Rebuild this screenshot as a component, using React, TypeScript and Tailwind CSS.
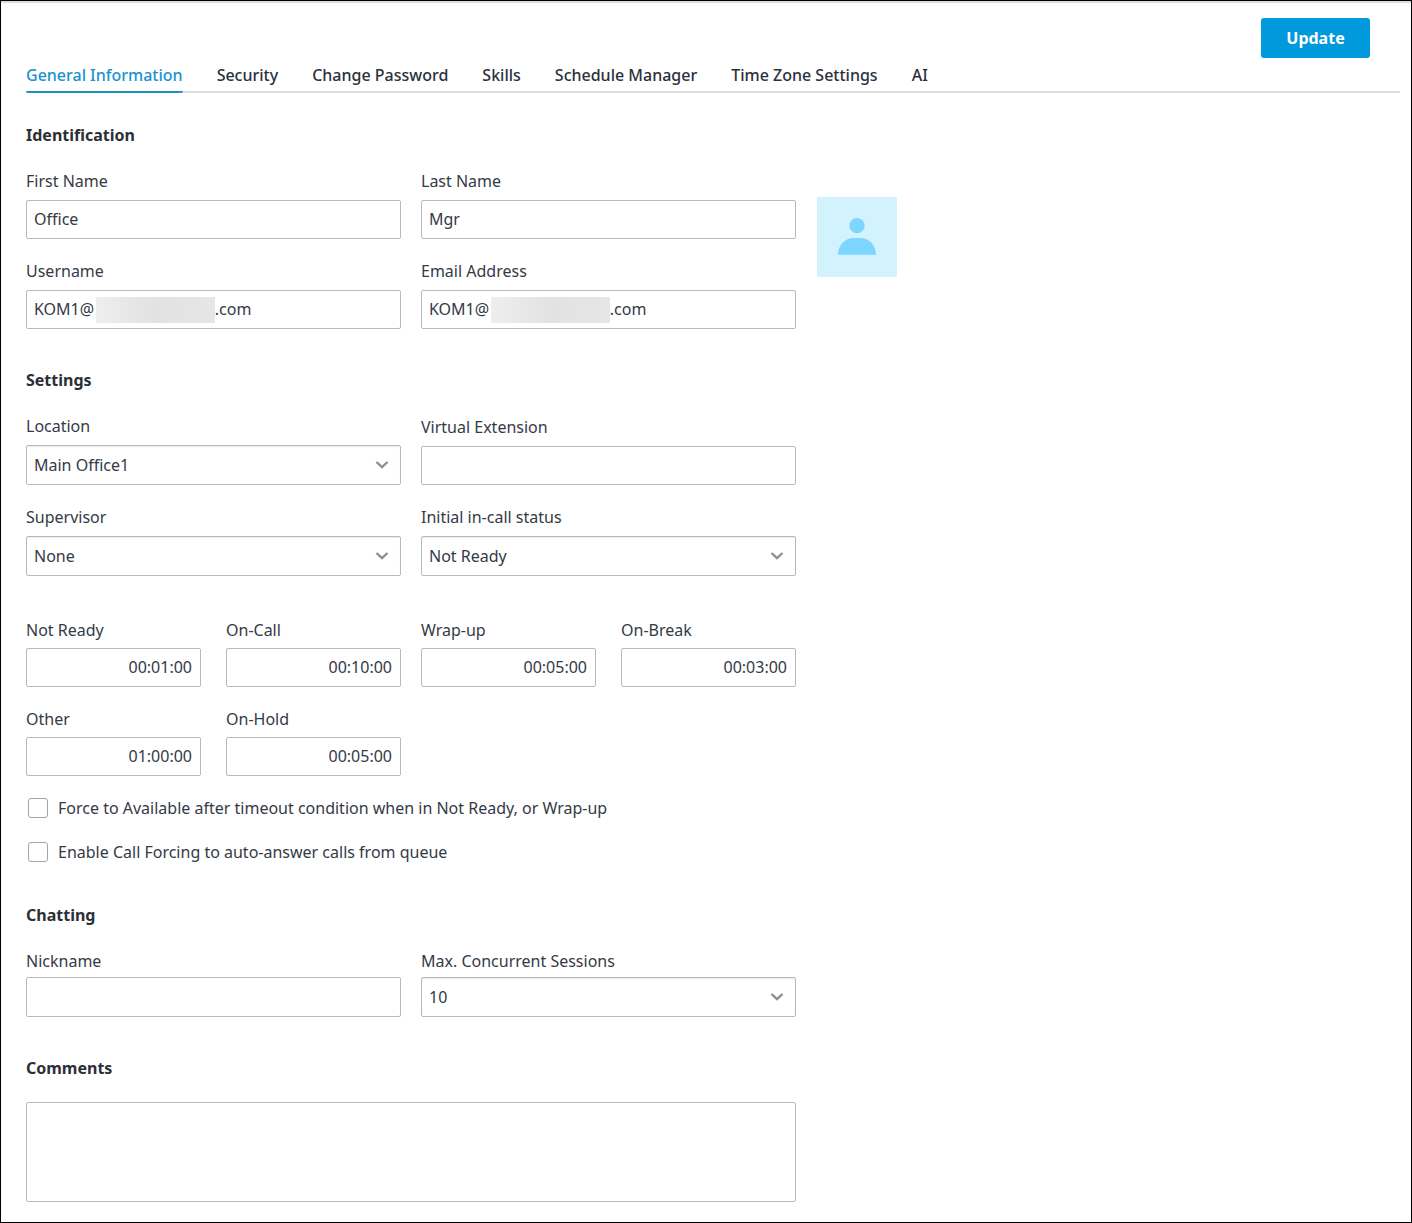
import { useId, useState } from "react";
import type { ReactNode } from "react";

const TABS = [
    "General Information",
    "Security",
    "Change Password",
    "Skills",
    "Schedule Manager",
    "Time Zone Settings",
    "AI",
];

// Keeps the space of the hidden part of an address
const MASKED = "\u00a0".repeat(29);

const TIMER_ROWS = [
    {
        left: [
            { label: "Not Ready", value: "00:01:00" },
            { label: "On-Call", value: "00:10:00" },
        ],
        right: [
            { label: "Wrap-up", value: "00:05:00" },
            { label: "On-Break", value: "00:03:00" },
        ],
    },
    {
        left: [
            { label: "Other", value: "01:00:00" },
            { label: "On-Hold", value: "00:05:00" },
        ],
        right: [],
    },
];

export default function App() {
    const [activeTab, setActiveTab] = useState(TABS[0]);

    return (
        <div className="border border-black bg-white font-['Noto_Sans',sans-serif] text-base leading-6 text-[#343a46]">
            <div className="border-t-2 border-[#dcdcdc] pt-[15px] pr-[11px] pb-5 pl-[25px]">
                <div className="flex justify-end pr-[30px]">
                    <button type="button" className="h-10 w-[109px] rounded-[3px] bg-[#0099dc] font-bold text-white">
                        Update
                    </button>
                </div>

                <nav className="mt-[5px] flex gap-[34px] border-b-2 border-[#dcdcdc]">
                    {TABS.map((tab) => (
                        <button
                            key={tab}
                            type="button"
                            onClick={() => setActiveTab(tab)}
                            className={
                                tab === activeTab
                                    ? "-mb-[2px] rounded-b-xs border-b-2 border-[#1e90c8] pb-1 font-medium text-[#1c91d0]"
                                    : "pb-1 font-medium text-[#2b313c]"
                            }
                        >
                            {tab}
                        </button>
                    ))}
                </nav>

                <form className="mt-[30px]" onSubmit={(e) => e.preventDefault()}>
                    <Section title="Identification">
                        <div className="flex items-start gap-[21px]">
                            <div className="grid w-full max-w-[770px] grid-cols-2 gap-5">
                                <TextField label="First Name" value="Office" />
                                <TextField label="Last Name" value="Mgr" />
                                <TextField label="Username" value={`KOM1@${MASKED}.com`} masked />
                                <TextField label="Email Address" value={`KOM1@${MASKED}.com`} masked />
                            </div>
                            <Avatar />
                        </div>
                    </Section>

                    <Section title="Settings">
                        <div className="grid max-w-[770px] grid-cols-2 items-end gap-5">
                            <SelectField label="Location" options={["Main Office1"]} />
                            <TextField label="Virtual Extension" value="" />
                            <SelectField label="Supervisor" options={["None"]} />
                            <SelectField label="Initial in-call status" options={["Not Ready", "Ready"]} />
                        </div>

                        <div className="mt-[42px] grid max-w-[770px] grid-cols-2 gap-5">
                            {TIMER_ROWS.flatMap((row) => [row.left, row.right]).map((pair, i) => (
                                <div key={i} className="grid grid-cols-2 gap-[25px]">
                                    {pair.map((timer) => (
                                        <TimeField key={timer.label} label={timer.label} value={timer.value} />
                                    ))}
                                </div>
                            ))}
                        </div>

                        <div className="mt-5 space-y-5">
                            <CheckField label="Force to Available after timeout condition when in Not Ready, or Wrap-up" />
                            <CheckField label="Enable Call Forcing to auto-answer calls from queue" />
                        </div>
                    </Section>

                    <Section title="Chatting">
                        <div className="grid max-w-[770px] grid-cols-2 items-end gap-5">
                            <TextField label="Nickname" value="" compact />
                            <SelectField label="Max. Concurrent Sessions" options={["10", "5", "1"]} compact />
                        </div>
                    </Section>

                    <Section title="Comments">
                        <textarea
                            aria-label="Comments"
                            className="block h-[100px] w-full max-w-[770px] resize-none rounded-xs border border-[#b9b9b9] p-2"
                        />
                    </Section>
                </form>
            </div>
        </div>
    );
}

const Section = ({ title, children }: { title: string; children: ReactNode }) => (
    <section className="mb-[39px] last:mb-0">
        <h2 className="mb-[22px] font-bold text-[#2b2f36]">{title}</h2>
        {children}
    </section>
);

type TextFieldProps = { label: string; value: string; masked?: boolean; compact?: boolean };

const TextField = ({ label, value, masked, compact }: TextFieldProps) => {
    const id = useId();
    return (
        <div>
            <label htmlFor={id} className={compact ? "mb-1 block" : "mb-[7px] block"}>{label}</label>
            <div className="relative">
                <input
                    id={id}
                    type="text"
                    defaultValue={value}
                    className={
                        compact
                            ? "block h-10 w-full rounded-xs border border-[#b9b9b9] px-[7px] pb-px"
                            : "block h-[39px] w-full rounded-xs border border-[#b9b9b9] px-[7px] pb-px"
                    }
                />
                {masked && (
                    <span className="absolute top-[7px] left-[70px] h-[26px] w-[119px] bg-linear-to-r from-[#eeeeee] via-[#e2e2e2] to-[#e6e6e6]" />
                )}
            </div>
        </div>
    );
};

const TimeField = ({ label, value }: { label: string; value: string }) => {
    const id = useId();
    return (
        <div>
            <label htmlFor={id} className="mb-[6px] block">{label}</label>
            <input
                id={id}
                type="text"
                defaultValue={value}
                className="block h-[39px] w-full rounded-xs border border-[#b9b9b9] px-2 pb-px text-right"
            />
        </div>
    );
};

type SelectFieldProps = { label: string; options: string[]; compact?: boolean };

const SelectField = ({ label, options, compact }: SelectFieldProps) => {
    const id = useId();
    return (
        <div>
            <label htmlFor={id} className={compact ? "mb-1 block" : "mb-[7px] block"}>{label}</label>
            <div className="relative">
                <select
                    id={id}
                    className="block h-10 w-full appearance-none rounded-xs border border-[#b9b9b9] bg-white px-[7px] pb-px shadow-[inset_0_1px_1px_rgba(0,0,0,0.08)]"
                >
                    {options.map((option) => (
                        <option key={option}>{option}</option>
                    ))}
                </select>
                <svg
                    viewBox="0 0 14 8"
                    className="pointer-events-none absolute top-4 right-3 h-2 w-3.5"
                    fill="none"
                    stroke="#8f8f8f"
                    strokeWidth="2.4"
                >
                    <path d="M1.5 1 7 6.2 12.5 1" />
                </svg>
            </div>
        </div>
    );
};

const CheckField = ({ label }: { label: string }) => (
    <label className="flex w-fit items-center gap-[10px] pl-[2px]">
        <input type="checkbox" className="size-5 appearance-none rounded-[3px] border border-[#a5a5a5] bg-white checked:bg-[#0099dc]" />
        {label}
    </label>
);

const Avatar = () => (
    <svg viewBox="0 0 80 80" className="mt-7 size-20 shrink-0">
        <rect width="80" height="80" rx="1" fill="#d2f2fe" />
        <circle cx="40" cy="28.7" r="7.6" fill="#7cd6ff" />
        <path d="M21 57.8C21 48 28 41 37 41h6c9 0 16 7 16 16.800z" fill="#7cd6ff" />
    </svg>
);
